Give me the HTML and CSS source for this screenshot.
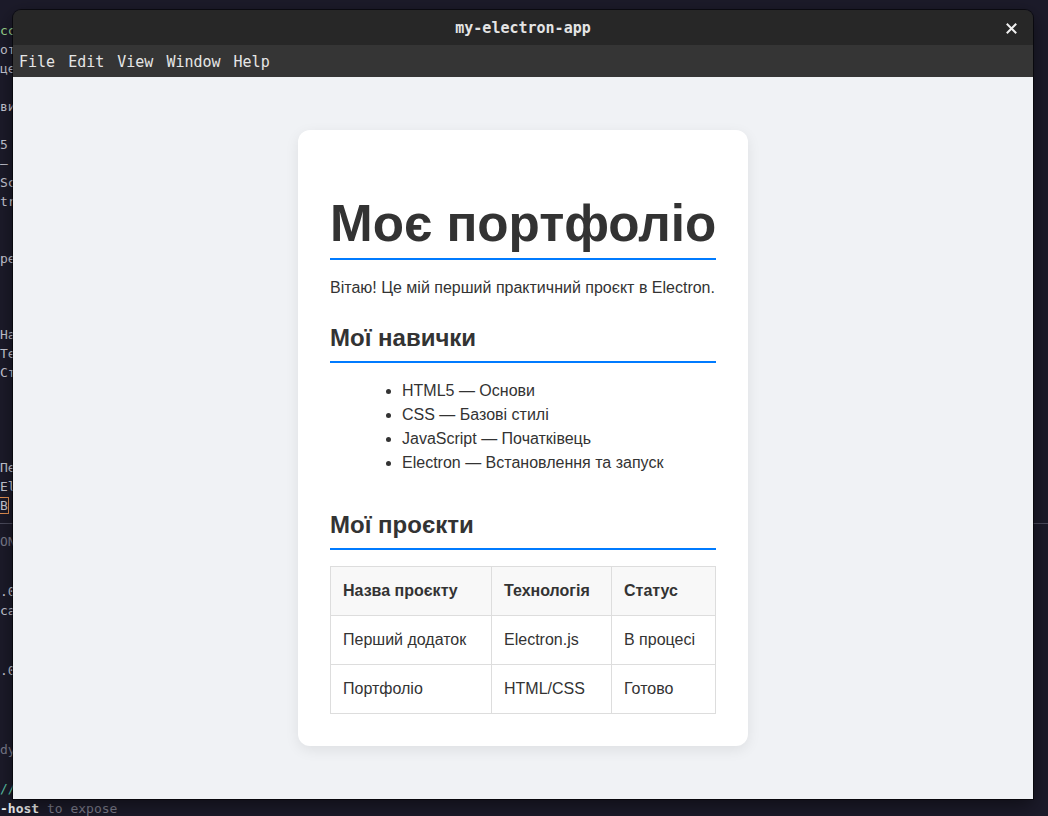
FILE: index.html
```html
<!DOCTYPE html>
<html lang="uk">
<head>
<meta charset="utf-8">
<title>my-electron-app</title>
<link rel="stylesheet" href="styles.css">
</head>
<body>
<div class="desktop">
  <div class="term">
<pre class="pane pane-top"><span class="g">cc</span>
от
це

ви

5
–
Sc
tr


ре



На
Те
Ст




Пе
El
<span class="cur">В</span></pre>
    <div class="divider"></div>
<pre class="pane pane-mid"><span class="dim">ON</span></pre>
<pre class="pane pane-bot">.0
ca


.0



<span class="dim">dy</span>

<span class="teal">//</span>
<b class="w">-host</b> <span class="dim">to expose</span></pre>
  </div>

  <div class="window">
    <div class="titlebar">
      <span class="title">my-electron-app</span>
      <span class="close"><svg width="11" height="11" viewBox="0 0 11 11"><path d="M1.5 1.5 L9.5 9.5 M9.5 1.5 L1.5 9.5" stroke="#f0f0f0" stroke-width="2" stroke-linecap="square"/></svg></span>
    </div>
    <div class="menubar">
      <span class="mi">File</span><span class="mi">Edit</span><span class="mi">View</span><span class="mi">Window</span><span class="mi">Help</span>
    </div>
    <div class="content">
      <div class="card">
        <h1>Моє портфоліо</h1>
        <p>Вітаю! Це мій перший практичний проєкт в Electron.</p>
        <h2>Мої навички</h2>
        <ul>
          <li>HTML5 — Основи</li>
          <li>CSS — Базові стилі</li>
          <li>JavaScript — Початківець</li>
          <li>Electron — Встановлення та запуск</li>
        </ul>
        <h2>Мої проєкти</h2>
        <table>
          <thead>
            <tr><th class="c1">Назва проєкту</th><th class="c2">Технологія</th><th>Статус</th></tr>
          </thead>
          <tbody>
            <tr><td>Перший додаток</td><td>Electron.js</td><td>В процесі</td></tr>
            <tr><td>Портфоліо</td><td>HTML/CSS</td><td>Готово</td></tr>
          </tbody>
        </table>
      </div>
    </div>
  </div>
</div>
</body>
</html>
```
FILE: styles.css
```css
* { box-sizing: border-box; }
html, body { margin: 0; padding: 0; }
body {
  width: 1048px;
  height: 816px;
  overflow: hidden;
  background: #1c1b2a;
}
.desktop {
  position: relative;
  width: 1048px;
  height: 816px;
  background: #1c1b2a;
}
.term {
  width: 1048px;
  height: 816px;
  padding-top: 20.5px;
  color: #c9c9d4;
  font-family: "DejaVu Sans Mono", monospace;
  font-size: 13px;
}
.pane {
  margin: 0;
  font: inherit;
  line-height: 19px;
  padding-left: 0;
  white-space: pre;
}
.pane-top { height: 494px; }
.divider {
  height: 1px;
  background: #4b4b5c;
  margin-top: 8px;
}
.pane-mid { line-height: 19px; margin-top: 8px; height: 40px; }
.pane-bot { line-height: 19.8px; margin-top: 10px; }
.g { color: #9fd68f; }
.dim { color: #7d7d8c; }
.teal { color: #5cc3a8; }
.w { color: #f2f2f2; font-weight: bold; }
.cur { outline: 1px solid #e59152; outline-offset: 0; }

.window {
  position: absolute;
  left: 13px;
  top: 10px;
  width: 1020px;
  height: 789px;
  display: flex;
  flex-direction: column;
  border-radius: 8px 8px 0 0;
  overflow: hidden;
  box-shadow: 0 0 0 1px rgba(0,0,0,0.55), 0 6px 20px rgba(0,0,0,0.5);
}
.titlebar {
  height: 35px;
  flex: none;
  background: #272727;
  display: flex;
  align-items: center;
  justify-content: center;
  position: relative;
  font-family: "DejaVu Sans Mono", monospace;
  font-weight: bold;
  font-size: 15px;
  color: #e4e4e4;
}
.close {
  position: absolute;
  right: 16px;
  top: 13px;
  width: 11px;
  height: 11px;
  display: flex;
}
.menubar {
  height: 32px;
  flex: none;
  background: #353535;
  display: flex;
  align-items: center;
  padding-left: 0;
  font-family: "DejaVu Sans Mono", monospace;
  font-size: 15px;
  color: #e6e6e6;
  padding-top: 1px;
}
.mi { padding: 0 7px 0 6px; }
.content {
  flex: 1;
  background: #f0f2f5;
  display: flex;
  align-items: center;
  justify-content: center;
}
.card {
  width: 450px;
  background: #fff;
  border-radius: 12px;
  padding: 32px;
  box-shadow: 0 4px 14px rgba(0,0,0,0.08);
  font-family: "Liberation Sans", Arial, sans-serif;
  color: #333;
  font-size: 16px;
  line-height: 24px;
}
h1 {
  margin: 34px 0 0;
  font-size: 51.2px;
  line-height: 56px;
  font-weight: bold;
  padding-bottom: 6px;
  border-bottom: 2px solid #007bff;
  white-space: nowrap;
}
p { margin: 16px 0 0; }
h2 {
  margin: 20px 0 0;
  font-size: 24px;
  line-height: 36px;
  font-weight: bold;
  padding-bottom: 5px;
  border-bottom: 2px solid #007bff;
}
ul {
  margin: 16px 0 32px;
  padding-left: 72px;
}
ul + h2 { margin-top: 0; }
table {
  margin-top: 16px;
  width: 100%;
  border-collapse: collapse;
}
th, td {
  border: 1px solid #ddd;
  padding: 12px;
  text-align: left;
  line-height: 24px;
}
th { background: #f8f8f8; font-weight: bold; }
.c1 { width: 161px; }
.c2 { width: 120px; }
```
